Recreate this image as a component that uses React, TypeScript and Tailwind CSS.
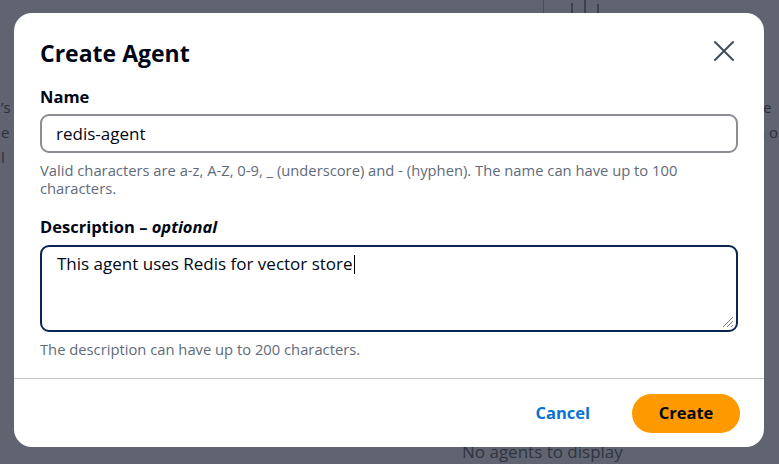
function Backdrop() {
  return (
    <div className="flex h-full w-full flex-col text-[#2a303a]">
      {/* top strip */}
      <div className="flex h-[13px] pl-[543px]">
        <div className="h-full w-px bg-[#4a4f58]" />
        <div className="ml-[27px] mt-[3px] h-[10px] w-[2px] bg-[#3c414a]" />
        <div className="ml-[11px] h-full w-[2px] bg-[#3c414a]" />
        <div className="ml-[11px] mt-[4px] h-[9px] w-[2px] bg-[#3c414a]" />
      </div>
      <div className="mt-[82px] flex justify-between text-[15px] leading-[25px]">
        <div className="pl-[1px]">
          <div>’s</div>
          <div>e O</div>
          <div>l</div>
        </div>
        <div className="pr-[1px]">
          <div>se</div>
          <div>n o</div>
        </div>
      </div>
      <div className="mt-[24px] h-px bg-[#6f747d]" />
      <div className="mt-[12px] h-px bg-[#6f747d]" />
      <div className="mt-[169px] h-px bg-[#6f747d]" />
      <div className="mt-[64px] pl-[462px] text-[17px] text-[#2f3540]">No agents to display</div>
    </div>
  );
}

export default function App() {
  return (
    <div
      className="relative h-[464px] w-[779px] overflow-hidden bg-[#5f6470]"
      style={{ fontFamily: '"Open Sans", "Noto Sans", Arial, sans-serif' }}
    >
      <Backdrop />
      <div className="absolute inset-0 pl-[14px] pt-[13px]">
        <div className="flex h-[434px] w-[750px] flex-col rounded-[18px] bg-white text-[#000716]">
          <div className="flex items-start justify-between pl-[26px] pr-[28px] pt-[24px]">
            <h1 className="text-[23px] font-bold leading-[32px]">Create Agent</h1>
            <button className="mt-[2px] flex h-[24px] w-[24px] items-center justify-center">
              <svg width="22" height="22" viewBox="0 0 22 22" fill="none">
                <path d="M2 2 L20 20 M20 2 L2 20" stroke="#414d5c" strokeWidth="2" strokeLinecap="round" />
              </svg>
            </button>
          </div>

          <div className="flex flex-col px-[26px] pt-[17px]">
            <label className="text-[16.5px] font-bold leading-[22px]">Name</label>
            <div className="mt-[6px] flex h-[39px] items-center rounded-[9px] border-2 border-[#8c8c94] px-[14px] text-[17px]">
              redis-agent
            </div>
            <p className="mt-[8px] text-[14.75px] leading-[18px] text-[#5f6b7a]">
              Valid characters are a-z, A-Z, 0-9, _ (underscore) and - (hyphen). The name can have up to 100
              characters.
            </p>

            <label className="mt-[19px] text-[16.5px] font-bold leading-[22px]">
              Description – <i>optional</i>
            </label>
            <div className="relative mt-[7px] h-[87px] rounded-[9px] border-2 border-[#0a2552] px-[15px] pt-[4px] text-[17px] leading-[22px]">
              <span>This agent uses Redis for vector store</span>
              <span className="ml-px inline-block h-[19px] w-px translate-y-[4px] bg-black" />
              <svg className="absolute bottom-[2px] right-[2px]" width="14" height="14" viewBox="0 0 14 14">
                <path d="M13 3 L3 13 M13 7 L7 13 M13 11 L11 13" stroke="#7b7b7b" strokeWidth="1" />
              </svg>
            </div>
            <p className="mt-[8px] text-[14.75px] leading-[18px] text-[#5f6b7a]">
              The description can have up to 200 characters.
            </p>
          </div>

          <div className="mt-[20px] h-px bg-[#c6c6cd]" />

          <div className="flex items-center justify-end gap-[42px] px-[24px] pt-[15px]">
            <button className="text-[16.5px] font-bold text-[#0972d3]">Cancel</button>
            <button className="h-[39px] w-[108px] rounded-full bg-[#ff9900] text-[16.5px] font-bold text-[#000716]">
              Create
            </button>
          </div>
        </div>
      </div>
    </div>
  );
}
